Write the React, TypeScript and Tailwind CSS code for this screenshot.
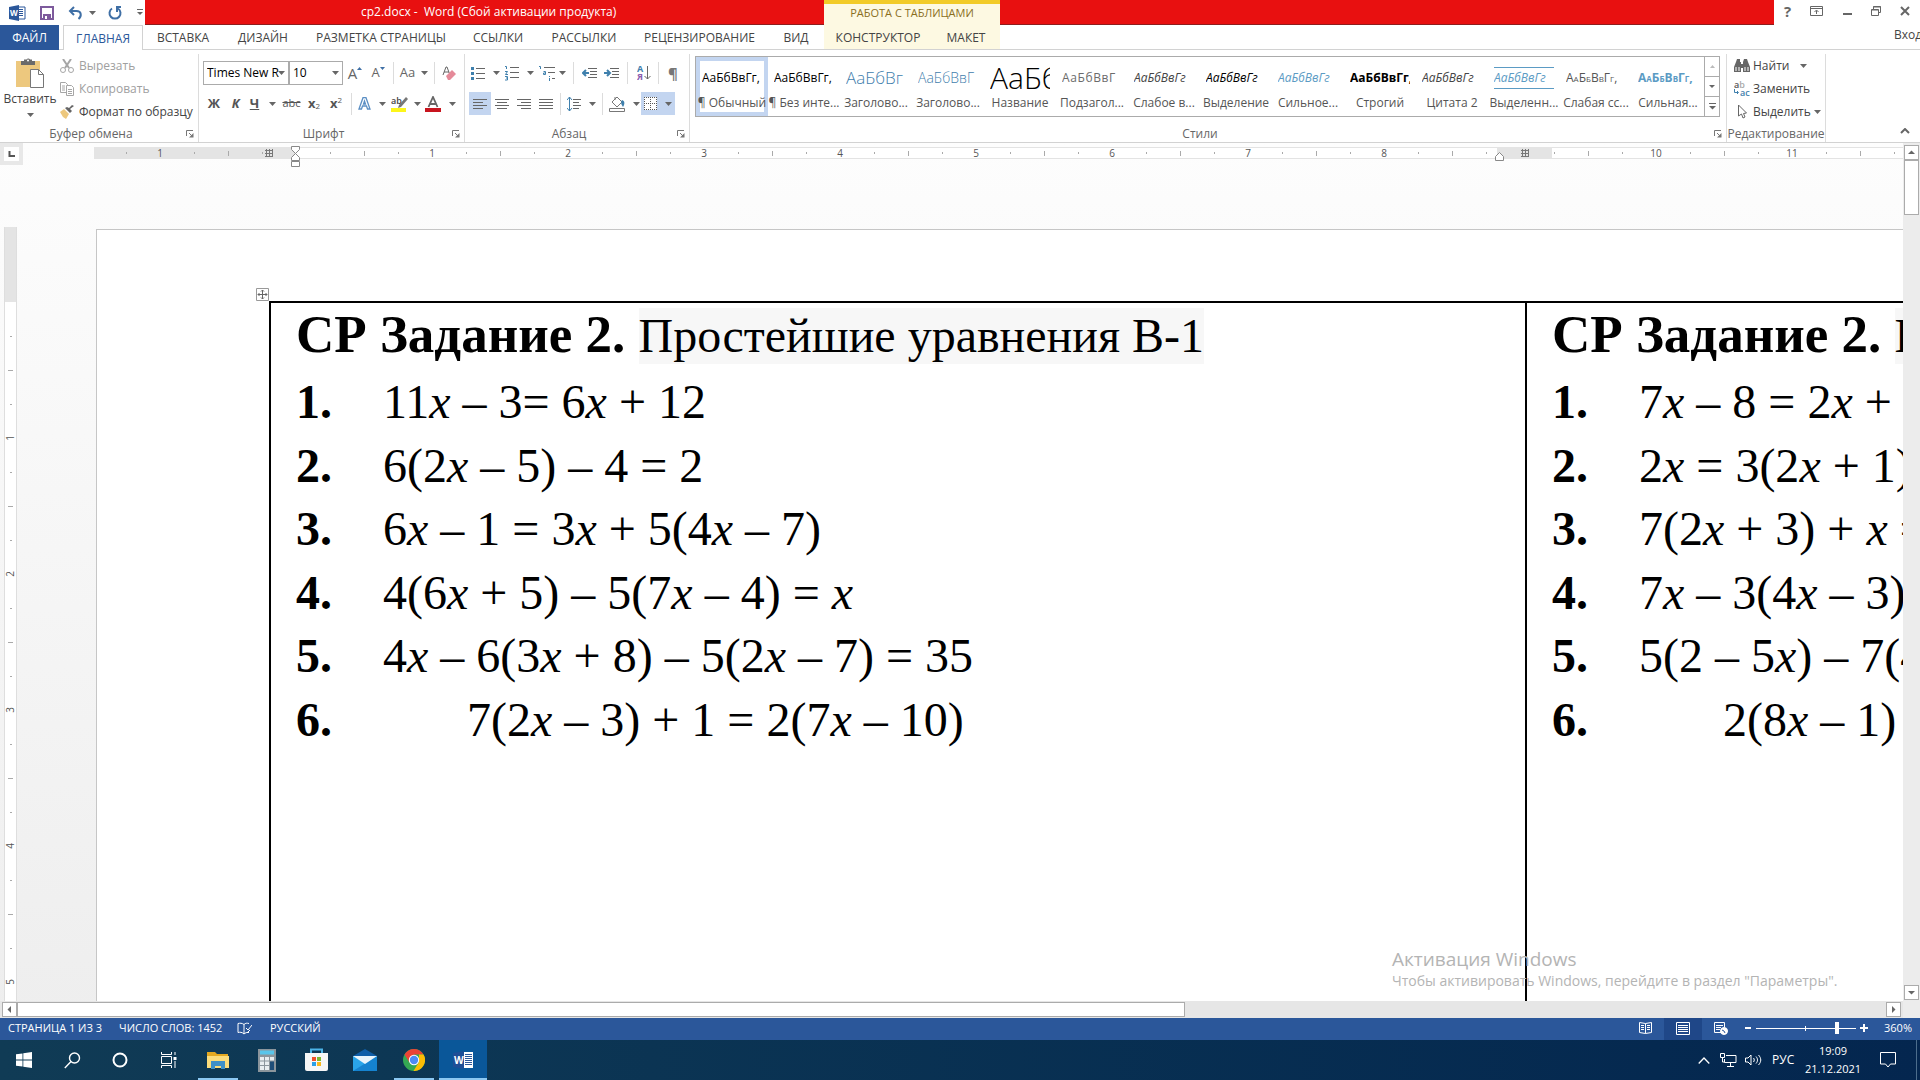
import React from 'react';
import { clsx } from 'clsx';

/* ---------- data ---------- */

const TABS = [
  { label: 'ВСТАВКА', width: 'w-[80px]' },
  { label: 'ДИЗАЙН', width: 'w-[80px]' },
  { label: 'РАЗМЕТКА СТРАНИЦЫ', width: 'w-[156px]' },
  { label: 'ССЫЛКИ', width: 'w-[78px]' },
  { label: 'РАССЫЛКИ', width: 'w-[94px]' },
  { label: 'РЕЦЕНЗИРОВАНИЕ', width: 'w-[137px]' },
  { label: 'ВИД', width: 'w-[56px]' },
];

const STYLES = [
  { name: '¶ Обычный', sample: 'АаБбВвГг,', look: 'text-[12px] text-black' },
  { name: '¶ Без инте...', sample: 'АаБбВвГг,', look: 'text-[12px] text-black' },
  { name: 'Заголово...', sample: 'АаБбВг', look: 'text-[17px] font-light text-[#3f80ad]' },
  { name: 'Заголово...', sample: 'АаБбВвГ', look: 'text-[14px] font-light text-[#3f80ad]' },
  { name: 'Название', sample: 'АаБб', look: 'text-[30px] font-light text-black' },
  { name: 'Подзагол...', sample: 'АаБбВвГ', look: 'text-[12px] tracking-wider text-[#6b6b6b]' },
  { name: 'Слабое в...', sample: 'АаБбВвГг', look: 'text-[12px] italic text-[#444]' },
  { name: 'Выделение', sample: 'АаБбВвГг', look: 'text-[12px] italic text-black' },
  { name: 'Сильное...', sample: 'АаБбВвГг', look: 'text-[12px] italic text-[#5b9bc4]' },
  { name: 'Строгий', sample: 'АаБбВвГг,', look: 'text-[12px] font-bold text-black' },
  { name: 'Цитата 2', sample: 'АаБбВвГг', look: 'text-[12px] italic text-[#444]' },
  { name: 'Выделенн...', sample: 'АаБбВвГг', look: 'text-[12px] italic text-[#5b9bc4] border-y border-[#5b9bc4]' },
  { name: 'Слабая сс...', sample: 'АаБбВвГг,', look: 'text-[12px] [font-variant:small-caps] text-[#555]' },
  { name: 'Сильная...', sample: 'АаБбВвГг,', look: 'text-[12px] [font-variant:small-caps] font-bold text-[#5b9bc4]' },
];

const VARIANTS = [
  {
    title: 'Простейшие уравнения В-1',
    tasks: [
      '11x – 3= 6x + 12',
      '6(2x – 5) – 4 = 2',
      '6x – 1 = 3x + 5(4x – 7)',
      '4(6x + 5) – 5(7x – 4) = x',
      '4x – 6(3x + 8) – 5(2x – 7) = 35',
      '7(2x – 3) + 1 = 2(7x – 10)',
    ],
  },
  {
    title: 'Простейшие уравнения В-2',
    tasks: [
      '7x – 8 = 2x + 7',
      '2x = 3(2x + 1) – 5',
      '7(2x + 3) + x = 6',
      '7x – 3(4x – 3) = 4',
      '5(2 – 5x) – 7(4 – x) = 0',
      '2(8x – 1) + 3 = 4(4x – 1)',
    ],
  },
];

/* ---------- small parts ---------- */

const Caret = ({ className = '' }: { className?: string }) => (
  <svg width="7" height="4" viewBox="0 0 7 4" className={clsx('shrink-0', className)}>
    <path d="M0 0h7L3.500 4z" fill="#666" />
  </svg>
);

const Sep = ({ className = '' }: { className?: string }) => (
  <div className={clsx('w-px h-[22px] shrink-0 bg-[#dcdcdc]', className)} />
);

const Btn = ({ label, className = '', children }: { label: string; className?: string; children: React.ReactNode }) => (
  <button type="button" aria-label={label} className={clsx('flex items-center justify-center shrink-0 h-[23px]', className)}>
    {children}
  </button>
);

const Launcher = () => (
  <button type="button" aria-label="Параметры группы" className="absolute right-1 bottom-1">
    <svg width="8" height="8" viewBox="0 0 8 8" fill="none" stroke="#777">
      <path d="M.5 6V.5H7M3 3l3 3" />
      <path d="M7.500 3v4.500H3z" fill="#777" stroke="none" />
    </svg>
  </button>
);

type GroupProps = { title: string; width?: string; launcher?: boolean; children: React.ReactNode };
const Group = ({ title, width = '', launcher = true, children }: GroupProps) => (
  <section className={clsx('relative flex flex-col shrink-0 h-[88px] mt-1 border-r border-[#dcdcdc]', width)}>
    <div className="flex-1">{children}</div>
    <h2 className={clsx('text-center leading-4 text-[#666]', launcher && 'pr-4')}>{title}</h2>
    {launcher && <Launcher />}
  </section>
);

// horizontal strokes of the alignment and list icons: [x1, x2] per line
const Lines = ({ rows, gap = 3 }: { rows: number[][]; gap?: number }) => (
  <>
    {rows.map(([a, b], i) => (
      <path key={i} d={`M${a} ${2.5 + i * gap}H${b}`} stroke="#666" />
    ))}
  </>
);

/* ---------- title bar and tabs ---------- */

const TitleBar = () => (
  <header className="flex h-[25px] shrink-0">
    <div className="flex items-center w-[145px] shrink-0">
      <svg width="17" height="16" viewBox="0 0 17 16" className="ml-[9px]">
        <path d="M9 2h7v12H9z" fill="#fff" stroke="#2b579a" />
        <path d="M10 4.500h4M10 6.500h4M10 8.500h4M10 10.500h4" stroke="#2b579a" />
        <path d="M0 2l10-2v16L0 14z" fill="#2b579a" />
        <text x="1" y="11" fontSize="8" fontWeight="700" fill="#fff">W</text>
      </svg>
      <Btn label="Сохранить" className="ml-[14px]">
        <svg width="14" height="14" viewBox="0 0 14 14">
          <path d="M1 1h12v12H1z" fill="#fff" stroke="#7d5a9c" strokeWidth="2" />
          <path d="M3 8h8v6H3z" fill="#7d5a9c" />
          <path d="M5 10h2v3H5z" fill="#fff" />
        </svg>
      </Btn>
      <Btn label="Отменить" className="ml-[14px] gap-1.5">
        <svg width="15" height="14" viewBox="0 0 15 14" fill="none" stroke="#3f6fa5" strokeWidth="2">
          <path d="M6 1L2 5l4 4M2 5h6.500c5 0 5.500 5 2 8" />
        </svg>
        <Caret />
      </Btn>
      <Btn label="Повторить" className="ml-3">
        <svg width="15" height="14" viewBox="0 0 15 14" fill="none" stroke="#3f6fa5" strokeWidth="2">
          <path d="M4 2.500A5.500 5.500 0 1 0 10 2.500M13 1H9v5" />
        </svg>
      </Btn>
      <Btn label="Настройка панели" className="ml-3.5">
        <svg width="6" height="7" viewBox="0 0 6 7">
          <path d="M0 .5h6" stroke="#666" />
          <path d="M0 3h6L3 6z" fill="#666" />
        </svg>
      </Btn>
    </div>
    <div className="flex items-center w-[679px] shrink-0 bg-[#e81010] border-b border-[#8f1d1d]">
      <h1 className="pl-[216px] text-white whitespace-pre">cp2.docx -  Word (Сбой активации продукта)</h1>
    </div>
    <div className="flex items-center justify-center w-[176px] shrink-0 bg-[#fdf9e2] border-t-4 border-[#f2cb28] text-[#8a6f1e] text-[11px] leading-4 pb-1">
      РАБОТА С ТАБЛИЦАМИ
    </div>
    <div className="flex-1 bg-[#e81010] border-b border-[#8f1d1d]" />
    <div className="flex items-center justify-between w-[146px] shrink-0 pl-2.5 pr-2.5 pb-1 text-[#666]">
      <button type="button" className="text-[15px] font-bold leading-4">?</button>
      <Btn label="Параметры ленты">
        <svg width="13" height="10" viewBox="0 0 13 10" fill="none" stroke="#666">
          <path d="M.5 .5h12v9H.5zM.5 2.500h12M6.500 8V4.500M4.500 6l2-2 2 2" />
        </svg>
      </Btn>
      <Btn label="Свернуть">
        <svg width="9" height="10" viewBox="0 0 9 10"><path d="M0 8h9" stroke="#666" strokeWidth="2" /></svg>
      </Btn>
      <Btn label="Восстановить">
        <svg width="10" height="10" viewBox="0 0 10 10" fill="none" stroke="#666">
          <path d="M2.500 3V.5h7v6H8M.5 3.500h7v6h-7zM2 1h8M.5 4h7" />
        </svg>
      </Btn>
      <Btn label="Закрыть">
        <svg width="10" height="10" viewBox="0 0 10 10"><path d="M1 1l8 8M9 1L1 9" stroke="#666" strokeWidth="2" /></svg>
      </Btn>
    </div>
  </header>
);

const RibbonTabs = () => (
  <nav className="flex h-[25px] shrink-0 border-b border-[#d2d2d2] whitespace-nowrap text-[#444]">
    <button type="button" className="w-[59px] shrink-0 h-[25px] pt-px bg-[#2b579a] text-white">ФАЙЛ</button>
    <button type="button" className="w-[80px] shrink-0 ml-1 h-[25px] pt-px bg-white border border-b-0 border-[#d2d2d2] text-[#2b579a]">ГЛАВНАЯ</button>
    {TABS.map(t => (
      <button type="button" key={t.label} className={clsx('shrink-0 pt-0.5', t.width)}>{t.label}</button>
    ))}
    <div className="flex bg-[#fdf9e2] shrink-0">
      <button type="button" className="w-[108px] pt-0.5">КОНСТРУКТОР</button>
      <button type="button" className="w-[68px] pt-0.5">МАКЕТ</button>
    </div>
    <a href="#login" className="ml-auto leading-5 w-[26px] overflow-hidden">Вход</a>
  </nav>
);

/* ---------- ribbon groups ---------- */

const ClipboardGroup = () => (
  <Group title="Буфер обмена" width="w-[199px]">
    <div className="flex">
      <button type="button" className="flex flex-col items-center w-[60px] pt-1 text-[#444]">
        <svg width="28" height="30" viewBox="0 0 28 30">
          <path d="M0 3h24v26H0z" fill="#edc87e" />
          <path d="M5 3h3V1.500h2.500a2 2 0 0 1 3.500 0H16V3h3v4H5z" fill="#6a6a6a" />
          <circle cx="12" cy="2.500" r="1" fill="#fff" />
          <path d="M14.500 11.500h8l5 5v13h-13z" fill="#fff" stroke="#777" />
          <path d="M22.500 11.500v5h5" fill="none" stroke="#777" />
        </svg>
        <span className="leading-4 mt-[3px]">Вставить</span>
        <Caret className="mt-1.5" />
      </button>
      <div className="flex flex-col text-[#a0a0a0]">
        <button type="button" className="flex items-center h-[23px] gap-[5px]">
          <svg width="14" height="14" viewBox="0 0 14 14" fill="none" stroke="#a6a6a6">
            <path d="M3 0l6 9M11 0L5 9" strokeWidth="2" />
            <circle cx="3" cy="11" r="2.500" />
            <circle cx="11" cy="11" r="2.500" />
          </svg>
          Вырезать
        </button>
        <button type="button" className="flex items-center h-[23px] gap-[5px]">
          <svg width="14" height="14" viewBox="0 0 14 14" fill="#fff" stroke="#a6a6a6">
            <path d="M.5 .5h5l2 2v8h-7zM2 4h3M2 6h3M2 8h3" />
            <path d="M6.500 3.500h5l2 2v8h-7zM8 7.500h4M8 9.500h4M8 11.500h4" />
          </svg>
          Копировать
        </button>
        <button type="button" className="flex items-center h-[23px] gap-[5px] text-[#444]">
          <svg width="14" height="14" viewBox="0 0 14 14">
            <path d="M0 7l4-3 5 5-3 5-3-2z" fill="#edc87e" />
            <path d="M5 3l5 5 2-2-2-2 4-3-2-1-3 3-2-1z" fill="#666" />
          </svg>
          Формат по образцу
        </button>
      </div>
    </div>
  </Group>
);

const Combo = ({ label, value, width }: { label: string; value: string; width: string }) => (
  <div className={clsx('relative shrink-0 h-6', width)}>
    <select aria-label={label} defaultValue={value} className="w-full h-full pl-[3px] pr-1 appearance-none rounded-none bg-transparent border border-[#ababab] text-black">
      <option>{value}</option>
    </select>
    <Caret className="absolute right-1 top-2.5 pointer-events-none" />
  </div>
);

const FontGroup = () => (
  <Group title="Шрифт" width="w-[266px]">
    <div className="flex items-center pl-1 pt-[7px] text-[#666]">
      <Combo label="Шрифт" value="Times New R" width="w-[86px]" />
      <Combo label="Размер шрифта" value="10" width="w-[54px]" />
      <Btn label="Увеличить размер" className="w-[24px] text-[15px]">
        А<svg width="5" height="3" viewBox="0 0 5 3" className="mb-2.5"><path d="M0 3h5L2.500 0z" fill="#3f6fa5" /></svg>
      </Btn>
      <Btn label="Уменьшить размер" className="w-[22px] text-[13px]">
        А<svg width="5" height="3" viewBox="0 0 5 3" className="mb-2.5"><path d="M0 0h5L2.500 3z" fill="#3f6fa5" /></svg>
      </Btn>
      <Sep className="mx-1" />
      <Btn label="Регистр" className="w-[32px] gap-1.5 text-[13px]">Aa<Caret /></Btn>
      <Sep className="mx-1" />
      <Btn label="Очистить формат" className="w-[20px]">
        <svg width="14" height="15" viewBox="0 0 14 15">
          <path d="M1 9l3-8h1l3 8M2 6h5" fill="none" stroke="#666" />
          <path d="M4 10l6-6 4 4-6 6H6z" fill="#e58a99" />
        </svg>
      </Btn>
    </div>
    <div className="flex items-center pl-1 pt-[7px] text-[#555] text-[13px]">
      <Btn label="Полужирный" className="w-[22px]"><b>Ж</b></Btn>
      <Btn label="Курсив" className="w-[21px]"><b className="italic">К</b></Btn>
      <Btn label="Подчеркнутый" className="w-[34px] gap-2.5"><b className="underline">Ч</b><Caret /></Btn>
      <Btn label="Зачеркнутый" className="w-[23px] text-[11px]"><s>abc</s></Btn>
      <Btn label="Подстрочный" className="w-[22px]"><b>x</b><sub className="text-[8px]">2</sub></Btn>
      <Btn label="Надстрочный" className="w-[22px]"><b>x</b><sup className="text-[8px]">2</sup></Btn>
      <Sep className="ml-1 mr-[3px]" />
      <Btn label="Текстовые эффекты" className="w-[34px] gap-2">
        <svg width="13" height="13" viewBox="0 0 13 13" fill="#fff" stroke="#5b8fc4" strokeWidth="1.300">
          <path d="M1 12L5 .7h3L12 12H9.500L8.500 9h-4l-1 3zM5.500 7h2l-1-3z" />
        </svg>
        <Caret />
      </Btn>
      <Btn label="Цвет выделения" className="w-[34px] gap-1.5">
        <svg width="17" height="16" viewBox="0 0 17 16">
          <text x="0" y="8" fontSize="9" fontWeight="600" fill="#444">ab</text>
          <path d="M15 1l2 2-7 8-3 1 1-3z" fill="#777" />
          <path d="M0 12h15v4H0z" fill="#fdf61a" />
        </svg>
        <Caret />
      </Btn>
      <Btn label="Цвет текста" className="w-[35px] gap-2">
        <svg width="16" height="16" viewBox="0 0 16 16">
          <path d="M3.500 11L8 1l4.500 10M5 8h6" fill="none" stroke="#666" strokeWidth="1.800" />
          <path d="M0 12h16v4H0z" fill="#c8141e" />
        </svg>
        <Caret />
      </Btn>
    </div>
  </Group>
);

const ParagraphGroup = () => (
  <Group title="Абзац" width="w-[225px]">
    <div className="flex items-center pl-1 pt-[7px] h-[31px]">
      <Btn label="Маркеры" className="w-[33px] gap-2">
        <svg width="14" height="15" viewBox="0 0 14 15">
          <Lines rows={[[5, 14], [5, 14], [5, 14]]} gap={5} />
          <path d="M0 1h3v3H0zM0 6h3v3H0zM0 11h3v3H0z" fill="#3f80ad" />
        </svg>
        <Caret />
      </Btn>
      <Btn label="Нумерация" className="w-[34px] gap-2">
        <svg width="14" height="16" viewBox="0 0 14 16">
          <Lines rows={[[5, 14], [5, 14], [5, 14]]} gap={5} />
          <path d="M0 1.500h1.500V4M0 6.500h2.500L.5 9.500H3M0 11.500h2.500v3.500H0M1 13h1.500" fill="none" stroke="#3f80ad" />
        </svg>
        <Caret />
      </Btn>
      <Btn label="Многоуровневый список" className="w-[32px] gap-1">
        <svg width="16" height="16" viewBox="0 0 16 16">
          <path d="M5 2.500h11M9 7.500h7M13 13.500h3" stroke="#666" />
          <path d="M0 1.500h1.500V4M4.500 6.500h2v3h-2v-1.500h2M10.500 11v1M10.500 13v3" fill="none" stroke="#3f80ad" />
        </svg>
        <Caret />
      </Btn>
      <Sep className="mx-[5px]" />
      <Btn label="Уменьшить отступ" className="w-[22px]">
        <svg width="16" height="12" viewBox="0 0 16 12">
          <path d="M6 1.500h9M8 4.500h7M8 7.500h7M6 10.500h9" stroke="#666" />
          <path d="M7 6H1M4 3L1 6l3 3" fill="none" stroke="#3f80ad" strokeWidth="2" />
        </svg>
      </Btn>
      <Btn label="Увеличить отступ" className="w-[22px]">
        <svg width="16" height="12" viewBox="0 0 16 12">
          <path d="M6 1.500h9M8 4.500h7M8 7.500h7M6 10.500h9" stroke="#666" />
          <path d="M0 6h6M3 3l3 3-3 3" fill="none" stroke="#3f80ad" strokeWidth="2" />
        </svg>
      </Btn>
      <Sep className="mx-1" />
      <Btn label="Сортировка" className="w-[24px]">
        <svg width="14" height="16" viewBox="0 0 14 16">
          <text x="0" y="7" fontSize="9" fontWeight="700" fill="#3f80ad">А</text>
          <text x="0" y="15" fontSize="9" fontWeight="700" fill="#8a5cb0">Я</text>
          <path d="M10.500 1v13M7.500 11l3 3 3-3" fill="none" stroke="#666" />
        </svg>
      </Btn>
      <Sep className="mx-0.5" />
      <Btn label="Все знаки" className="w-[24px] text-[15px] font-bold text-[#777]">¶</Btn>
    </div>
    <div className="flex items-center pl-1 pt-[7px]">
      <Btn label="По левому краю" className="w-[22px] bg-[#c3d5f0]">
        <svg width="14" height="14" viewBox="0 0 14 14"><Lines rows={[[0, 14], [0, 10], [0, 14], [0, 10]]} /></svg>
      </Btn>
      <Btn label="По центру" className="w-[22px]">
        <svg width="14" height="14" viewBox="0 0 14 14"><Lines rows={[[0, 14], [2, 12], [0, 14], [2, 12]]} /></svg>
      </Btn>
      <Btn label="По правому краю" className="w-[22px]">
        <svg width="14" height="14" viewBox="0 0 14 14"><Lines rows={[[0, 14], [4, 14], [0, 14], [4, 14]]} /></svg>
      </Btn>
      <Btn label="По ширине" className="w-[22px]">
        <svg width="14" height="14" viewBox="0 0 14 14"><Lines rows={[[0, 14], [0, 14], [0, 14], [0, 14]]} /></svg>
      </Btn>
      <Sep className="mx-[3px]" />
      <Btn label="Интервал" className="w-[34px] gap-2">
        <svg width="14" height="16" viewBox="0 0 14 16">
          <path d="M6 3.500h8M6 6.500h6M6 9.500h8M6 12.500h6" stroke="#666" />
          <path d="M2.500 1v14M0 4l2.500-3L5 4M0 12l2.500 3L5 12" fill="none" stroke="#3f80ad" />
        </svg>
        <Caret />
      </Btn>
      <Sep className="mx-1" />
      <Btn label="Заливка" className="w-[34px] gap-2">
        <svg width="16" height="16" viewBox="0 0 16 16" fill="none" stroke="#777">
          <path d="M3 6l5-5 5 5-5 5zM6 4V1" />
          <path d="M13 4c3 1 3 4 1 7-1-2-3-4-1-7z" fill="#3f80ad" stroke="none" />
          <path d="M.5 12.500h15v3H.5z" />
        </svg>
        <Caret />
      </Btn>
      <Btn label="Границы" className="w-[34px] gap-2 bg-[#c3d5f0]">
        <svg width="13" height="13" viewBox="0 0 13 13">
          <path d="M0 0h13v13H0z" fill="#fff" />
          <path d="M0 .5h13M.5 0v13M12.500 0v13M0 12.500h13M6.500 0v13M0 6.500h13" fill="none" stroke="#555" strokeDasharray="1 1" />
        </svg>
        <Caret />
      </Btn>
    </div>
  </Group>
);

const StylesGroup = () => (
  <Group title="Стили">
    <div className="flex h-[61px] mt-0.5 ml-[5px] mr-1.5 border border-[#ababab]">
      {STYLES.map((s, i) => (
        <button
          type="button"
          key={i}
          className={clsx('flex flex-col items-center w-[72px] shrink-0 h-[59px] border-[4px]', i === 0 ? 'border-[#c3d5f0]' : 'border-transparent')}
        >
          <span className="flex items-center w-[60px] h-[34px] overflow-hidden">
            <span className={clsx('w-full leading-5 text-left whitespace-nowrap', s.look)}>{s.sample}</span>
          </span>
          <span className="leading-4 whitespace-nowrap text-[#555]">{s.name}</span>
        </button>
      ))}
      <div className="flex flex-col w-[15px] border-l border-[#ababab] divide-y divide-[#ababab]">
        <button type="button" aria-label="Вверх" className="flex-1 flex items-center justify-center">
          <svg width="5" height="3" viewBox="0 0 5 3"><path d="M0 3h5L2.500 0z" fill="#bbb" /></svg>
        </button>
        <button type="button" aria-label="Вниз" className="flex-1 flex items-center justify-center">
          <svg width="6" height="3" viewBox="0 0 6 3"><path d="M0 0h6L3 3z" fill="#666" /></svg>
        </button>
        <button type="button" aria-label="Все стили" className="flex-1 flex items-center justify-center">
          <svg width="7" height="7" viewBox="0 0 7 7"><path d="M0 .5h7" stroke="#666" /><path d="M0 3h7L3.500 6.500z" fill="#666" /></svg>
        </button>
      </div>
    </div>
  </Group>
);

const EditingGroup = () => (
  <Group title="Редактирование" width="w-[99px]" launcher={false}>
    <div className="flex flex-col pl-[7px] text-[#444]">
      <button type="button" className="flex items-center h-[23px] gap-[3px]">
        <svg width="16" height="13" viewBox="0 0 16 13" fill="#666">
          <path d="M3 0h3v3h1v10H0V8l2-5zM10 0h3l1 3 2 5v5H9V3zM7 5h2v4H7z" />
          <path d="M2 8v4M5 8v4M11 8v4M14 8v4" stroke="#fff" />
        </svg>
        Найти
        <Caret className="ml-2" />
      </button>
      <button type="button" className="flex items-center h-[23px] gap-[3px]">
        <svg width="16" height="15" viewBox="0 0 16 15">
          <text x="0" y="7" fontSize="9" fontWeight="600" fill="#555">a<tspan fill="#aaa">b</tspan></text>
          <text x="6" y="15" fontSize="9" fontWeight="600" fill="#3f80ad">ac</text>
          <path d="M.5 8v3.500H4M3 10l1.500 1.500L3 13" fill="none" stroke="#3f80ad" />
        </svg>
        Заменить
      </button>
      <button type="button" className="flex items-center h-[23px] gap-[3px]">
        <svg width="16" height="15" viewBox="0 0 16 15">
          <path d="M4.500 1v11l3-2 1.500 4 2-1-1.500-3.500 3-.5z" fill="#fff" stroke="#666" />
        </svg>
        Выделить
        <Caret />
      </button>
    </div>
  </Group>
);

/* ---------- rulers ---------- */

const GridMark = ({ className = '' }: { className?: string }) => (
  <svg width="8" height="8" viewBox="0 0 8 8" className={clsx('absolute top-px', className)}>
    <path d="M1.500 0v8M4.500 0v8M7.500 0v8M0 1.500h8M0 4.500h8M0 7.500h8" stroke="#777" />
  </svg>
);

// one cell is a quarter of an inch, zero lies at the edge of the text
const tickKind = (k: number) => (k % 4 === 0 ? 'number' : k % 2 === 0 ? 'half' : 'quarter');

const HorizontalRuler = () => (
  <div className="relative flex h-[12px] ml-[94px] mt-1 bg-white border-y border-[#e3e3e3] text-[10px] leading-[10px] text-[#555]">
    <div className="absolute left-0 -inset-y-px w-[201px] bg-[#e4e4e4]" />
    <div className="absolute left-[1403px] -inset-y-px w-[55px] bg-[#e4e4e4]" />
    <div className="relative flex w-full pl-[15px] overflow-hidden">
      {Array.from({ length: 54 }, (_, i) => i - 5).map(k => (
        <div key={k} className="flex items-center justify-center w-[34px] shrink-0">
          {tickKind(k) === 'number' && k !== 0 && k !== 36 && Math.abs(k / 4)}
          {tickKind(k) === 'half' && <i className="w-px h-[5px] bg-[#aaa]" />}
          {tickKind(k) === 'quarter' && <i className="w-px h-0.5 bg-[#aaa]" />}
        </div>
      ))}
    </div>
    <GridMark className="left-[171px]" />
    <GridMark className="left-[1427px]" />
    <svg width="10" height="22" viewBox="0 0 10 22" className="absolute left-[197px] -top-0.5" fill="#fff" stroke="#888">
      <path d="M.5 .5h8v3l-4 4-4-4zM.5 14.500v-3l4-4 4 4v3zM.5 15.500h8v5h-8z" />
    </svg>
    <svg width="9" height="9" viewBox="0 0 9 9" className="absolute left-[1401px] top-1" fill="#fff" stroke="#888">
      <path d="M.5 8.500v-4l4-4 4 4v4z" />
    </svg>
  </div>
);

const VerticalRuler = () => (
  <div className="flex flex-col w-[13px] shrink-0 ml-1 mt-[62px] bg-white border-x border-[#dedede] text-[10px] leading-[11px] text-[#555] overflow-hidden">
    <div className="h-[92px] shrink-0">
      <div className="h-[75px] bg-[#e4e4e4]" />
    </div>
    {Array.from({ length: 20 }, (_, i) => i + 1).map(k => (
      <div key={k} className="flex items-center justify-center h-[34px] shrink-0">
        {tickKind(k) === 'number' && <span className="[writing-mode:vertical-rl] rotate-180">{k / 4}</span>}
        {tickKind(k) === 'half' && <i className="h-px w-[5px] bg-[#aaa]" />}
        {tickKind(k) === 'quarter' && <i className="h-px w-0.5 bg-[#aaa]" />}
      </div>
    ))}
  </div>
);

/* ---------- document ---------- */

// unknowns are set in italics, the rest is upright
const Formula = ({ text }: { text: string }) => (
  <>{text.split(/(x)/).map((part, i) => (part === 'x' ? <i key={i}>x</i> : part))}</>
);

const DocumentPage = () => (
  <div className="shrink-0 w-[2600px] min-h-full border-t border-l border-[#c6c6c6] bg-white">
    <div className="relative ml-[172px] mt-[71px]">
      <button type="button" aria-label="Переместить таблицу" className="absolute -left-[13px] -top-[13px]">
        <svg width="13" height="13" viewBox="0 0 13 13" fill="#fff" stroke="#666">
          <path d="M.5 .5h12v12H.5z" stroke="#999" />
          <path d="M6.500 2v9M2 6.500h9M5 3.500l1.500-1.500L8 3.500M5 9.500l1.500 1.500L8 9.500M3.500 5L2 6.500 3.500 8M9.500 5L11 6.500 9.500 8" fill="none" />
        </svg>
      </button>
      <table className="table-fixed border-collapse w-[2514px] text-black font-['Liberation_Serif',serif] text-[48px]">
        <tbody>
          <tr>
            {VARIANTS.map(v => (
              <td key={v.title} className="h-[1100px] align-top border-2 border-black pl-[25px] whitespace-nowrap">
                <h3 className="flex items-baseline h-[67px] pt-px">
                  <b className="text-[53px] leading-[60px] whitespace-pre">СР Задание 2. </b>
                  <span className="leading-[56px] bg-[#f7f7f7]">{v.title}</span>
                </h3>
                <ol className="grid grid-rows-6 h-[381px] leading-[64px]">
                  {v.tasks.map((t, i) => (
                    <li key={t} className="flex">
                      <b className={i === 5 ? 'w-[171px]' : 'w-[87px]'}>{i + 1}.</b>
                      <span><Formula text={t} /></span>
                    </li>
                  ))}
                </ol>
              </td>
            ))}
          </tr>
        </tbody>
      </table>
    </div>
  </div>
);

const Arrow = ({ d, label, className = '' }: { d: string; label: string; className?: string }) => (
  <button type="button" aria-label={label} className={clsx('flex items-center justify-center shrink-0 size-[15px] bg-white border border-[#ababab]', className)}>
    <svg width="7" height="7" viewBox="0 0 7 7"><path d={d} fill="#666" /></svg>
  </button>
);

const Workspace = () => (
  <main className="relative flex flex-1 min-h-0 bg-linear-to-b from-[#fdfdfd] to-[#eeeeee]">
    <div className="flex flex-col flex-1 min-w-0">
      <div className="relative h-[22px] shrink-0">
        <div className="absolute left-0 top-0 flex items-center justify-center w-[23px] h-[22px] bg-[#e8e8e8]">
          <svg width="15" height="14" viewBox="0 0 15 14"><path d="M0 0h15v14H0z" fill="#fff" /><path d="M5.500 4v5H11" fill="none" stroke="#555" strokeWidth="2" /></svg>
        </div>
        <HorizontalRuler />
      </div>
      <div className="flex flex-1 min-h-0">
        <VerticalRuler />
        <div className="flex flex-1 min-w-0 pl-[79px] pt-[64px] overflow-hidden">
          <DocumentPage />
        </div>
      </div>
      <div className="flex h-[17px] shrink-0 items-center bg-[#e6e6e6] pl-0.5">
        <Arrow label="Влево" d="M5 0v7L1.500 3.500z" />
        <div className="w-[1168px] h-[15px] bg-white border border-[#ababab]" />
        <Arrow label="Вправо" d="M2 0v7l3.500-3.500z" className="ml-auto mr-0.5" />
      </div>
    </div>
    <div className="flex flex-col w-[17px] shrink-0 pt-0.5 bg-[#ececec]">
      <Arrow label="Вверх" d="M0 5h7L3.500 1.500z" className="ml-px" />
      <div className="w-[15px] h-[55px] ml-px bg-white border border-[#ababab]" />
      <Arrow label="Вниз" d="M0 2h7L3.500 5.500z" className="mt-auto mb-[18px] ml-px" />
    </div>
    <div className="absolute left-[1392px] bottom-[27px] text-[#b4b4b4] whitespace-nowrap">
      <p className="text-[19px] leading-6">Активация Windows</p>
      <p className="text-[14px] leading-5">Чтобы активировать Windows, перейдите в раздел "Параметры".</p>
    </div>
  </main>
);

/* ---------- status bar ---------- */

const StatusBar = () => (
  <footer className="flex items-center h-[22px] shrink-0 pl-2 pr-2 pb-0.5 bg-[#2b579a] text-white text-[11px] whitespace-nowrap">
    <span className="w-[111px]">СТРАНИЦА 1 ИЗ 3</span>
    <span className="w-[118px]">ЧИСЛО СЛОВ: 1452</span>
    <Btn label="Правописание" className="w-[15px]">
      <svg width="15" height="13" viewBox="0 0 15 13" fill="none" stroke="#fff">
        <path d="M7 2.500C5 1 3 1 1 1.500v9c2-.5 4-.5 6 1.500M7 2.500V12c1-1 3-2 5-1.500M7 2.500C8.500 1 10 1 12 1.500M9 6l2 2 4-5M10 11l3-3" />
      </svg>
    </Btn>
    <span className="ml-[18px]">РУССКИЙ</span>
    <div className="flex items-center ml-auto h-full">
      <Btn label="Режим чтения" className="w-[38px]">
        <svg width="13" height="12" viewBox="0 0 13 12" fill="none" stroke="#fff">
          <path d="M6.500 1.500L.5 .5v10l6 1 6-1V.5zM6.500 1.500v10M2 3.500h3M2 5.500h3M2 7.500h3M8 3.500h3M8 5.500h3M8 7.500h3" />
        </svg>
      </Btn>
      <Btn label="Разметка страницы" className="w-[38px] bg-[#1f4788]">
        <svg width="14" height="13" viewBox="0 0 14 13" fill="none" stroke="#fff">
          <path d="M.5 .5h13v12H.5zM2 3.500h10M2 5.500h10M2 7.500h10M2 9.500h10" />
        </svg>
      </Btn>
      <Btn label="Веб-документ" className="w-[38px]">
        <svg width="14" height="13" viewBox="0 0 14 13" fill="none" stroke="#fff">
          <path d="M7 10.500H.5V.5h10V5M2 3.500h7M2 5.500h5M2 7.500h4" />
          <circle cx="10" cy="9" r="3.500" fill="#fff" />
          <path d="M8 8l2 1 1 2" stroke="#2b579a" />
        </svg>
      </Btn>
      <Btn label="Уменьшить" className="w-4">
        <svg width="6" height="6" viewBox="0 0 6 6"><path d="M0 3h6" stroke="#fff" strokeWidth="2" /></svg>
      </Btn>
      <div className="relative flex items-center w-[100px]">
        <i className="absolute left-[49px] w-px h-[5px] bg-white" />
        <input
          type="range"
          aria-label="Масштаб"
          min="0"
          max="100"
          defaultValue="82"
          className="w-full h-px appearance-none bg-white [&::-webkit-slider-thumb]:appearance-none [&::-webkit-slider-thumb]:w-1 [&::-webkit-slider-thumb]:h-3 [&::-webkit-slider-thumb]:bg-white"
        />
      </div>
      <Btn label="Увеличить" className="w-4">
        <svg width="8" height="8" viewBox="0 0 8 8"><path d="M0 4h8M4 0v8" stroke="#fff" strokeWidth="2" /></svg>
      </Btn>
      <button type="button" className="ml-3">360%</button>
    </div>
  </footer>
);

/* ---------- taskbar ---------- */

type AppProps = { label: string; active?: boolean; running?: boolean; children: React.ReactNode };
const TaskApp = ({ label, active, running, children }: AppProps) => (
  <button type="button" aria-label={label} className={clsx('relative flex items-center justify-center w-12 h-10 mr-px shrink-0', active && 'bg-[#0a5799]')}>
    {children}
    {(active || running) && <i className={clsx('absolute bottom-0 h-0.5 bg-[#8cc8f2]', active ? 'inset-x-0' : 'inset-x-1')} />}
  </button>
);

const Taskbar = () => (
  <nav className="flex items-center h-10 shrink-0 bg-linear-to-r from-[#103b55] to-[#04264f] text-white">
    <button type="button" aria-label="Пуск" className="flex items-center justify-center w-12 h-10">
      <svg width="16" height="16" viewBox="0 0 16 16" fill="#fff"><path d="M0 2.300L6.500 1.400v6.200H0zM7.300 1.300L16 0v7.600H7.300zM0 8.400h6.500v6.200L0 13.700zM7.300 8.400H16V16l-8.700-1.300z" /></svg>
    </button>
    <button type="button" aria-label="Поиск" className="flex items-center justify-center w-12 h-10">
      <svg width="17" height="17" viewBox="0 0 17 17" fill="none" stroke="#fff" strokeWidth="1.400"><circle cx="10.500" cy="6" r="5" /><path d="M7 9.500L.8 16" /></svg>
    </button>
    <button type="button" aria-label="Кортана" className="flex items-center justify-center w-12 h-10">
      <svg width="16" height="16" viewBox="0 0 16 16" fill="none" stroke="#fff" strokeWidth="2"><circle cx="8" cy="8" r="6.500" /></svg>
    </button>
    <button type="button" aria-label="Представление задач" className="flex items-center justify-center w-[50px] h-10">
      <svg width="16" height="16" viewBox="0 0 16 16" fill="none" stroke="#fff"><path d="M.5 0v2.500h10V0M.5 16v-2.500h10V16M.5 4.500h10v7H.5zM14 0v3M14 9v7" /><path d="M12.500 5h3v3h-3z" fill="#fff" stroke="none" /></svg>
    </button>
    <TaskApp label="Проводник" running>
      <svg width="22" height="19" viewBox="0 0 22 19">
        <path d="M0 1h8l2 2h11v14H0z" fill="#e3a821" />
        <path d="M0 5h22v12H0z" fill="#fbdc7c" />
        <path d="M4 10h14v8h-4v-3H8v3H4z" fill="#3f90c8" />
      </svg>
    </TaskApp>
    <TaskApp label="Калькулятор">
      <svg width="18" height="23" viewBox="0 0 18 23">
        <path d="M0 0h18v23H0z" fill="#8b959c" />
        <path d="M2 1.500h14v4H2z" fill="#59c5ea" />
        <path d="M2 8h4v3.500H2zM7 8h4v3.500H7zM12 8h4v3.500h-4zM2 12.500h4V16H2zM7 12.500h4V16H7zM2 17h4v4H2zM7 17h4v4H7z" fill="#e8edf0" />
        <path d="M12 12.500h4V21h-4z" fill="#1f4e79" />
      </svg>
    </TaskApp>
    <TaskApp label="Магазин">
      <svg width="23" height="24" viewBox="0 0 23 24">
        <path d="M6 6V1.500h11V6" fill="none" stroke="#4cb4e7" strokeWidth="2" />
        <path d="M0 5h23v16a2 2 0 0 1-2 2H2a2 2 0 0 1-2-2z" fill="#f6f6f6" />
        <path d="M7 9h4v4H7z" fill="#f0512a" /><path d="M12 9h4v4h-4z" fill="#7cb82f" />
        <path d="M7 14h4v4H7z" fill="#2b9fe6" /><path d="M12 14h4v4h-4z" fill="#f8b71c" />
      </svg>
    </TaskApp>
    <TaskApp label="Почта">
      <svg width="24" height="22" viewBox="0 0 24 22">
        <path d="M0 7L12 0l12 7z" fill="#0f5ea8" />
        <path d="M0 7h24v15H0z" fill="#2aa5ea" />
        <path d="M0 22L24 7v15z" fill="#1583d0" />
        <path d="M0 7h24l-12 8z" fill="#e8f4fb" />
      </svg>
    </TaskApp>
    <TaskApp label="Chrome" running>
      <svg width="22" height="22" viewBox="0 0 22 22">
        <circle cx="11" cy="11" r="11" fill="#34a853" />
        <path d="M1.500 5.500A11 11 0 0 1 20.500 5.500H11L6.500 13.500z" fill="#ea4335" />
        <path d="M20.500 5.500A11 11 0 0 1 10.500 22L16 13V5.500z" fill="#fbbc05" />
        <circle cx="11" cy="11" r="5.200" fill="#fff" /><circle cx="11" cy="11" r="4.200" fill="#4c8bf5" />
      </svg>
    </TaskApp>
    <TaskApp label="Word" active>
      <svg width="21" height="18" viewBox="0 0 21 18">
        <path d="M10 1h10v16H10z" fill="#fff" />
        <path d="M12 3.500h7M12 5.500h7M12 7.500h7M12 9.500h7M12 11.500h7M12 13.500h7" stroke="#2b579a" />
        <path d="M0 2l11-2v18L0 16z" fill="#1f4f96" />
        <text x="1" y="13" fontSize="10" fontWeight="700" fill="#fff">W</text>
      </svg>
    </TaskApp>
    <div className="flex items-center ml-auto h-full pr-[3px]">
      <svg width="12" height="7" viewBox="0 0 12 7" fill="none" stroke="#fff" strokeWidth="1.300"><path d="M.7 6.500L6 1l5.300 5.500" /></svg>
      <svg width="17" height="14" viewBox="0 0 17 14" fill="none" stroke="#fff" className="ml-2.5"><path d="M6 2.500h10v7H4.500V6M10.500 10v3M7 13.500h7M.5 .5h4v4h-4zM2.500 5v4h2" /></svg>
      <svg width="17" height="14" viewBox="0 0 17 14" fill="none" stroke="#fff" className="ml-2"><path d="M.5 5v4h2.500l3 3V2L3 5zM8.500 5c1 1.300 1 2.700 0 4M11 3.500c2 2.300 2 4.700 0 7M13.500 2c3 3.300 3 6.700 0 10" /></svg>
      <span className="ml-2.5 w-[22px]">РУС</span>
      <div className="flex flex-col items-center w-[78px] text-[11px] leading-[18px]">
        <time>19:09</time>
        <time>21.12.2021</time>
      </div>
      <Btn label="Уведомления" className="ml-2 w-[16px]">
        <svg width="16" height="16" viewBox="0 0 16 16" fill="none" stroke="#fff"><path d="M.5 .5h15v11.500h-5L8 15l-2.500-3h-5z" /></svg>
      </Btn>
      <i className="ml-5 w-px h-10 bg-[#4c6d8c]" />
    </div>
  </nav>
);

export default function App() {
  return (
    <div className="flex flex-col h-screen overflow-hidden bg-white font-['Open_Sans','Noto_Sans',sans-serif] text-[12px]">
      <TitleBar />
      <RibbonTabs />
      <div className="flex h-[93px] shrink-0 border-b border-[#d2d2d2] whitespace-nowrap">
        <ClipboardGroup />
        <FontGroup />
        <ParagraphGroup />
        <StylesGroup />
        <EditingGroup />
        <Btn label="Свернуть ленту" className="ml-auto mt-auto mr-2.5 w-[10px]">
          <svg width="10" height="6" viewBox="0 0 10 6"><path d="M1 5l4-4 4 4" fill="none" stroke="#666" strokeWidth="2" /></svg>
        </Btn>
      </div>
      <Workspace />
      <StatusBar />
      <Taskbar />
    </div>
  );
}
